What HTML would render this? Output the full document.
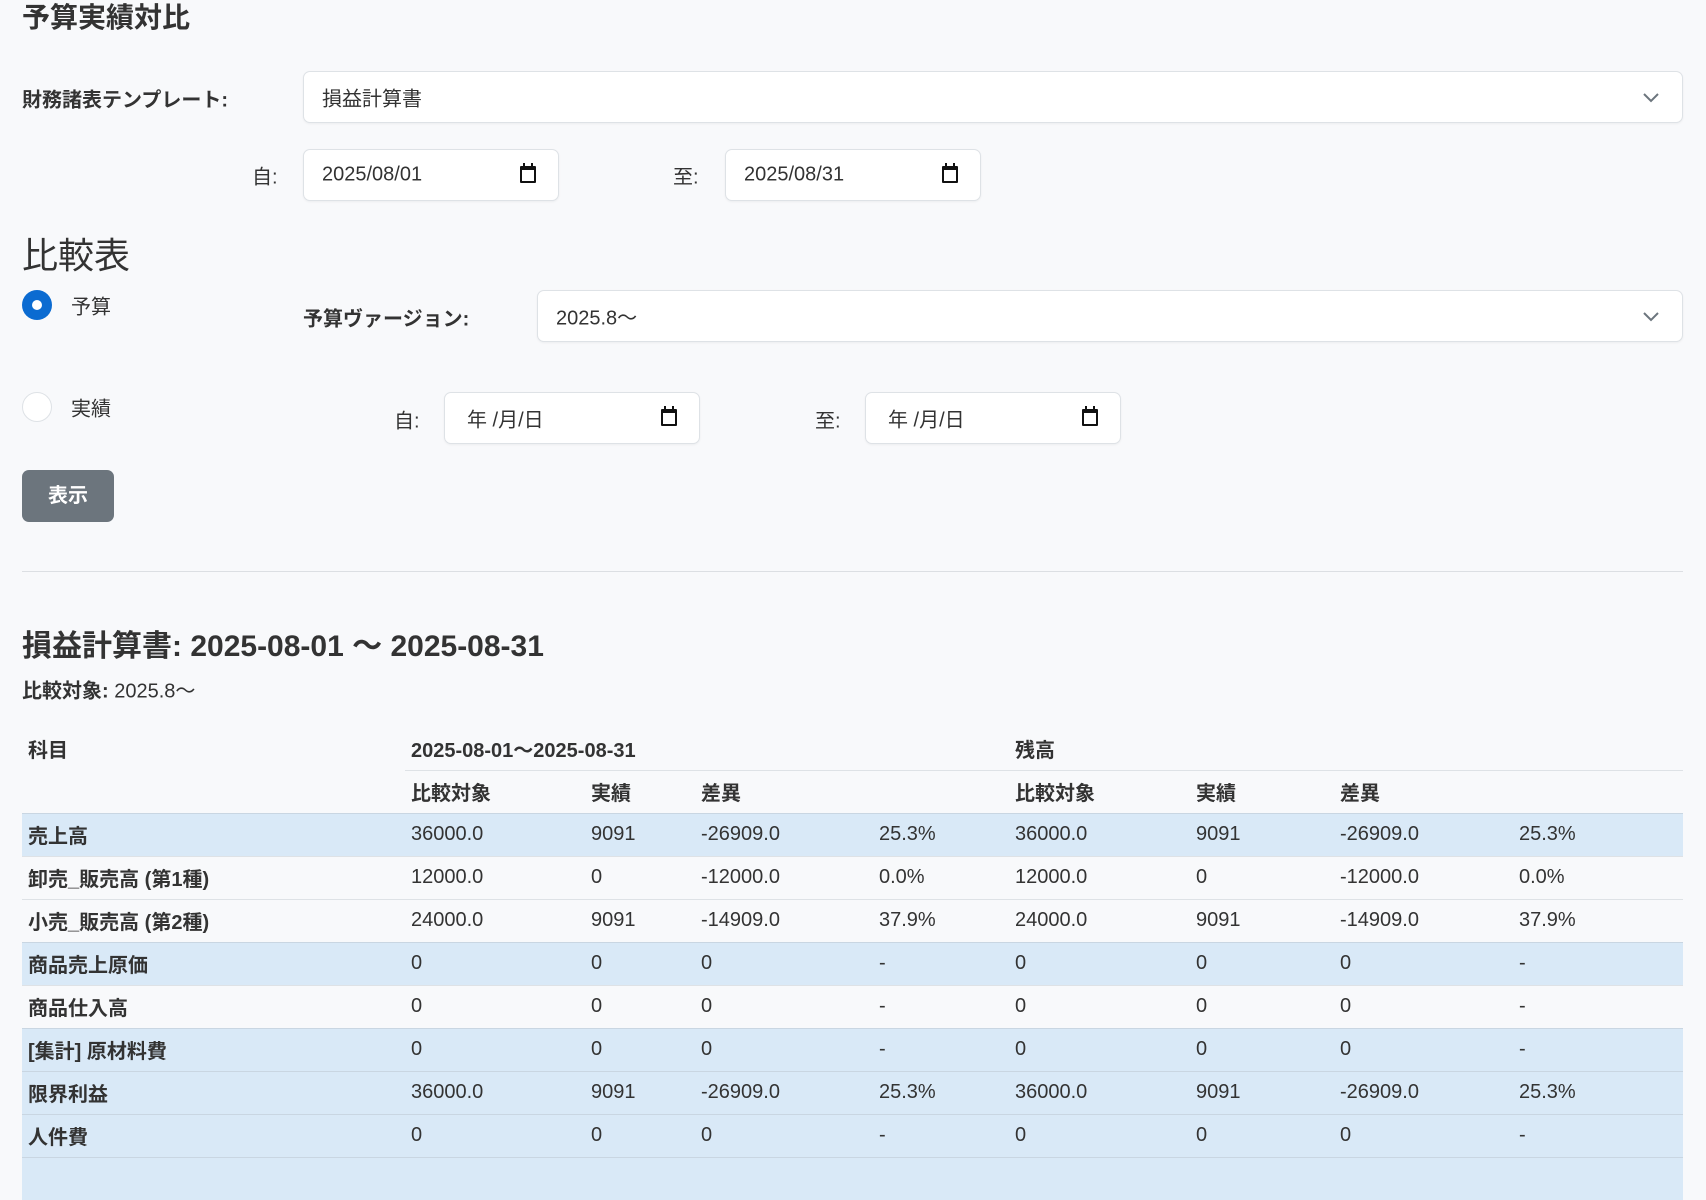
<!DOCTYPE html>
<html><head><meta charset="utf-8">
<style>
*{box-sizing:border-box;margin:0;padding:0}
body{width:1706px;height:1169px;overflow:hidden;background:#f8f9fb;font-family:"Liberation Sans","Noto Sans CJK JP",sans-serif;color:#212529;position:relative}
.a{position:absolute;white-space:nowrap}
.box{position:absolute;background:#fff;border:1px solid #dee2e6;border-radius:7px;box-shadow:0 1px 2px rgba(0,0,0,.05)}
.lbl{font-size:20px;font-weight:bold;color:#333;transform:translateY(-50%)}
.val{font-size:20px;color:#333;position:absolute;left:18px;top:50%;transform:translateY(-50%)}
.cal{position:absolute;right:22px;top:50%;margin-top:-9px;width:16px;height:17px;border:2px solid #111;border-top-width:4px;border-radius:1px}
.cal:before,.cal:after{content:"";position:absolute;top:-7px;width:2px;height:4px;background:#111}
.cal:before{left:1px}.cal:after{right:1px}
.chev{position:absolute;right:22px;top:50%;margin-top:-8px}
table{position:absolute;left:22px;top:727px;width:1661px;border-collapse:collapse;font-size:20px;color:#333}
td,th{height:43px;padding:0 6px;text-align:left;vertical-align:middle}
th{font-weight:bold}
tr.b td{background:#d9e9f7}
tbody tr td{border-top:1px solid #c9d6e2}
tbody tr.w td{border-top:1px solid #dee2e6}
td:first-child{font-weight:bold}
</style></head><body>
<div class="a" style="left:22px;top:16px;transform:translateY(-50%);font-size:28px;font-weight:bold;color:#333">予算実績対比</div>

<div class="a lbl" style="left:22px;top:98px">財務諸表テンプレート:</div>
<div class="box" style="left:303px;top:71px;width:1380px;height:52px"><span class="val">損益計算書</span>
<svg class="chev" width="18" height="16" viewBox="0 0 18 16"><path d="M2 5l7 7 7-7" fill="none" stroke="#6c757d" stroke-width="2"/></svg></div>

<div class="a lbl" style="left:252px;top:175px;font-weight:normal">自:</div>
<div class="box" style="left:303px;top:149px;width:256px;height:52px"><span class="val">2025/08/01</span><span class="cal"></span></div>
<div class="a lbl" style="left:673px;top:175px;font-weight:normal">至:</div>
<div class="box" style="left:725px;top:149px;width:256px;height:52px"><span class="val">2025/08/31</span><span class="cal"></span></div>

<div class="a" style="left:22px;top:253px;transform:translateY(-50%);font-size:36px;color:#333">比較表</div>

<div class="a" style="left:22px;top:290px;width:30px;height:30px;border-radius:50%;background:#0b6bd1"><div style="position:absolute;left:10px;top:10px;width:10px;height:10px;border-radius:50%;background:#fff"></div></div>
<div class="a lbl" style="left:71px;top:305px;font-weight:normal">予算</div>
<div class="a lbl" style="left:303px;top:317px">予算ヴァージョン:</div>
<div class="box" style="left:537px;top:290px;width:1146px;height:52px"><span class="val">2025.8～</span>
<svg class="chev" width="18" height="16" viewBox="0 0 18 16"><path d="M2 5l7 7 7-7" fill="none" stroke="#6c757d" stroke-width="2"/></svg></div>

<div class="a" style="left:22px;top:392px;width:30px;height:30px;border-radius:50%;background:#fff;border:1px solid #dee2e6"></div>
<div class="a lbl" style="left:71px;top:407px;font-weight:normal">実績</div>
<div class="a lbl" style="left:394px;top:419px;font-weight:normal">自:</div>
<div class="box" style="left:444px;top:392px;width:256px;height:52px"><span class="val" style="left:22px">年 /月/日</span><span class="cal"></span></div>
<div class="a lbl" style="left:815px;top:419px;font-weight:normal">至:</div>
<div class="box" style="left:865px;top:392px;width:256px;height:52px"><span class="val" style="left:22px">年 /月/日</span><span class="cal"></span></div>

<div class="a" style="left:22px;top:470px;width:92px;height:52px;background:#6c757d;border-radius:7px;color:#fff;font-size:20px;font-weight:bold;text-align:center;line-height:52px">表示</div>

<div class="a" style="left:22px;top:571px;width:1661px;height:1px;background:#dcdfe3"></div>

<div class="a" style="left:22px;top:643px;transform:translateY(-50%);font-size:30px;font-weight:bold;color:#333">損益計算書: 2025-08-01 ～ 2025-08-31</div>
<div class="a" style="left:22px;top:689px;transform:translateY(-50%);font-size:20px;color:#333"><b>比較対象:</b> 2025.8～</div>

<table>
<colgroup><col style="width:383px"><col style="width:180px"><col style="width:110px"><col style="width:178px"><col style="width:136px"><col style="width:181px"><col style="width:144px"><col style="width:179px"><col></colgroup>
<thead>
<tr><th>科目</th><th colspan="4" style="border-bottom:1px solid #dee2e6">2025-08-01～2025-08-31</th><th colspan="4" style="border-bottom:1px solid #dee2e6">残高</th></tr>
<tr><th></th><th>比較対象</th><th>実績</th><th>差異</th><th></th><th>比較対象</th><th>実績</th><th>差異</th><th></th></tr>
</thead>
<tbody>
<tr class="b"><td>売上高</td><td>36000.0</td><td>9091</td><td>-26909.0</td><td>25.3%</td><td>36000.0</td><td>9091</td><td>-26909.0</td><td>25.3%</td></tr>
<tr class="w"><td>卸売_販売高 (第1種)</td><td>12000.0</td><td>0</td><td>-12000.0</td><td>0.0%</td><td>12000.0</td><td>0</td><td>-12000.0</td><td>0.0%</td></tr>
<tr class="w"><td>小売_販売高 (第2種)</td><td>24000.0</td><td>9091</td><td>-14909.0</td><td>37.9%</td><td>24000.0</td><td>9091</td><td>-14909.0</td><td>37.9%</td></tr>
<tr class="b"><td>商品売上原価</td><td>0</td><td>0</td><td>0</td><td>-</td><td>0</td><td>0</td><td>0</td><td>-</td></tr>
<tr class="w"><td>商品仕入高</td><td>0</td><td>0</td><td>0</td><td>-</td><td>0</td><td>0</td><td>0</td><td>-</td></tr>
<tr class="b"><td>[集計] 原材料費</td><td>0</td><td>0</td><td>0</td><td>-</td><td>0</td><td>0</td><td>0</td><td>-</td></tr>
<tr class="b"><td>限界利益</td><td>36000.0</td><td>9091</td><td>-26909.0</td><td>25.3%</td><td>36000.0</td><td>9091</td><td>-26909.0</td><td>25.3%</td></tr>
<tr class="b"><td>人件費</td><td>0</td><td>0</td><td>0</td><td>-</td><td>0</td><td>0</td><td>0</td><td>-</td></tr>
<tr class="b"><td>&nbsp;</td><td></td><td></td><td></td><td></td><td></td><td></td><td></td><td></td></tr>
</tbody>
</table>
</body></html>
